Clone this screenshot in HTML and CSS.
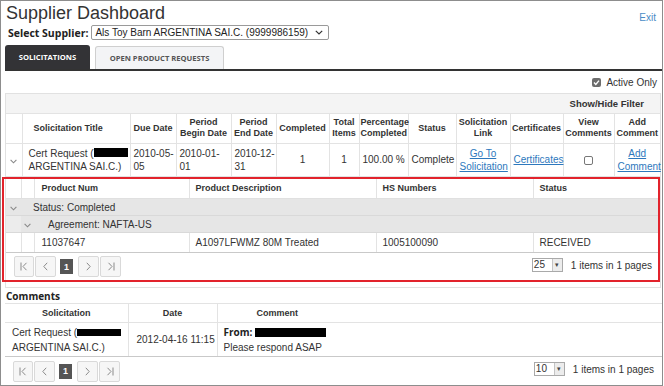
FILE: index.html
```html
<!DOCTYPE html>
<html>
<head>
<meta charset="utf-8">
<link rel="stylesheet" href="styles.css">
</head>
<body>
<div class="frame">
  <header class="top">
    <h1 class="title">Supplier Dashboard</h1>
    <a class="exit" href="#">Exit</a>
  </header>
  <div class="supplier">
    <span class="sel-label">Select Supplier:</span>
    <div class="select"><span>Als Toy Barn ARGENTINA SAI.C. (9999986159)</span><svg class="sel-chev" width="8" height="5" viewBox="0 0 8 5"><path d="M0.8 0.8 L4 4 L7.2 0.8" fill="none" stroke="#333" stroke-width="1.2"/></svg></div>
  </div>
  <nav class="tabs">
    <div class="tab tab-active">SOLICITATIONS</div>
    <div class="tab tab-idle">OPEN PRODUCT REQUESTS</div>
  </nav>
  <div class="active-only">
    <span class="cb cb-on"><svg width="9" height="9" viewBox="0 0 9 9"><path d="M2 4.6 L3.8 6.4 L7 2.6" fill="none" stroke="#fff" stroke-width="1.4"/></svg></span>
    <span>Active Only</span>
  </div>

  <div class="grid">
    <div class="toolbar"><span class="filter">Show/Hide Filter</span></div>
    <table class="sol">
      <colgroup>
        <col class="w16"><col class="w108"><col class="w46"><col class="w55"><col class="w45"><col class="w53"><col class="w30"><col class="w49"><col class="w48"><col class="w54"><col class="w53"><col class="w51"><col class="w46">
      </colgroup>
      <thead>
        <tr>
          <th class="first"></th>
          <th class="th-title">Solicitation Title</th>
          <th>Due Date</th>
          <th>Period<br>Begin Date</th>
          <th>Period<br>End Date</th>
          <th>Completed</th>
          <th>Total<br>Items</th>
          <th>Percentage<br>Completed</th>
          <th>Status</th>
          <th>Solicitation<br>Link</th>
          <th>Certificates</th>
          <th>View<br>Comments</th>
          <th>Add<br>Comment</th>
        </tr>
      </thead>
      <tbody>
        <tr class="datarow">
          <td class="first exp"><svg width="7" height="5" viewBox="0 0 7 5"><path d="M0.6 0.8 L3.5 3.8 L6.4 0.8" fill="none" stroke="#888" stroke-width="1.1"/></svg></td>
          <td class="title-cell">Cert Request (<span class="redact r-title"></span><br>ARGENTINA SAI.C.)</td>
          <td class="dt">2010-05-<br>05</td>
          <td class="dt">2010-01-<br>01</td>
          <td class="dt">2010-12-<br>31</td>
          <td class="ctr">1</td>
          <td class="ctr">1</td>
          <td class="ctr">100.00 %</td>
          <td class="ctr">Complete</td>
          <td class="ctr"><a class="lnk" href="#">Go To</a><br><a class="lnk" href="#">Solicitation</a></td>
          <td class="ctr"><a class="lnk" href="#">Certificates</a></td>
          <td class="ctr"><span class="cb cb-off"></span></td>
          <td class="ctr"><a class="lnk" href="#">Add</a><br><a class="lnk" href="#">Comment</a></td>
        </tr>
        <tr class="detailrow">
          <td colspan="13" class="detail-cell">
            <div class="detail">
              <table class="inner">
                <colgroup><col class="w15"><col class="w13"><col class="w155"><col class="w187"><col class="w157"><col class="w127"></colgroup>
                <thead>
                  <tr><th></th><th></th><th>Product Num</th><th>Product Description</th><th>HS Numbers</th><th>Status</th></tr>
                </thead>
                <tbody>
                  <tr class="grp">
                    <td class="gi"><svg width="7" height="5" viewBox="0 0 7 5"><path d="M0.6 0.8 L3.5 3.8 L6.4 0.8" fill="none" stroke="#888" stroke-width="1.1"/></svg></td>
                    <td colspan="5" class="gtext g1">Status: Completed</td>
                  </tr>
                  <tr class="grp">
                    <td class="gi gi-blank"></td>
                    <td class="gi"><svg width="7" height="5" viewBox="0 0 7 5"><path d="M0.6 0.8 L3.5 3.8 L6.4 0.8" fill="none" stroke="#888" stroke-width="1.1"/></svg></td>
                    <td colspan="4" class="gtext g2">Agreement: NAFTA-US</td>
                  </tr>
                  <tr class="item">
                    <td></td><td></td><td>11037647</td><td>A1097LFWMZ 80M Treated</td><td>1005100090</td><td>RECEIVED</td>
                  </tr>
                </tbody>
              </table>
              <div class="pager">
                <div class="pg-nav">
                  <span class="pbtn"><svg width="8" height="9" viewBox="0 0 8 9"><path d="M1 0.5 V8.5 M6.5 0.8 L3 4.5 L6.5 8.2" fill="none" stroke="#8a8a8a" stroke-width="1"/></svg></span>
                  <span class="pbtn"><svg width="5" height="9" viewBox="0 0 5 9"><path d="M4.2 0.8 L0.8 4.5 L4.2 8.2" fill="none" stroke="#8a8a8a" stroke-width="1"/></svg></span>
                  <span class="pnum">1</span>
                  <span class="pbtn"><svg width="5" height="9" viewBox="0 0 5 9"><path d="M0.8 0.8 L4.2 4.5 L0.8 8.2" fill="none" stroke="#8a8a8a" stroke-width="1"/></svg></span>
                  <span class="pbtn"><svg width="8" height="9" viewBox="0 0 8 9"><path d="M1.5 0.8 L5 4.5 L1.5 8.2 M7 0.5 V8.5" fill="none" stroke="#8a8a8a" stroke-width="1"/></svg></span>
                </div>
                <div class="pg-info">
                  <span class="psize"><span class="pval">25</span><span class="parr">&#9662;</span></span>
                  <span class="ptext">1 items in 1 pages</span>
                </div>
              </div>
              <div class="highlight"></div>
            </div>
          </td>
        </tr>
      </tbody>
    </table>
  </div>

  <section class="comments">
    <div class="ctitle">Comments</div>
    <table class="ctable">
      <colgroup><col class="w123"><col class="w89"><col class="w120"><col></colgroup>
      <thead>
        <tr><th>Solicitation</th><th>Date</th><th>Comment</th><th class="blank"></th></tr>
      </thead>
      <tbody>
        <tr>
          <td class="c-sol"><div class="cl">Cert Request (<span class="redact r-csol"></span></div><div class="cl">ARGENTINA SAI.C.)</div></td>
          <td class="c-date">2012-04-16 11:15</td>
          <td class="c-com"><div class="cl"><b class="from">From:</b> <span class="redact r-from"></span></div><div class="cl">Please respond ASAP</div></td>
          <td class="blank"></td>
        </tr>
      </tbody>
    </table>
    <div class="pager pager2">
      <div class="pg-nav">
        <span class="pbtn"><svg width="8" height="9" viewBox="0 0 8 9"><path d="M1 0.5 V8.5 M6.5 0.8 L3 4.5 L6.5 8.2" fill="none" stroke="#8a8a8a" stroke-width="1"/></svg></span>
        <span class="pbtn"><svg width="5" height="9" viewBox="0 0 5 9"><path d="M4.2 0.8 L0.8 4.5 L4.2 8.2" fill="none" stroke="#8a8a8a" stroke-width="1"/></svg></span>
        <span class="pnum">1</span>
        <span class="pbtn"><svg width="5" height="9" viewBox="0 0 5 9"><path d="M0.8 0.8 L4.2 4.5 L0.8 8.2" fill="none" stroke="#8a8a8a" stroke-width="1"/></svg></span>
        <span class="pbtn"><svg width="8" height="9" viewBox="0 0 8 9"><path d="M1.5 0.8 L5 4.5 L1.5 8.2 M7 0.5 V8.5" fill="none" stroke="#8a8a8a" stroke-width="1"/></svg></span>
      </div>
      <div class="pg-info">
        <span class="psize"><span class="pval">10</span><span class="parr">&#9662;</span></span>
        <span class="ptext">1 items in 1 pages</span>
      </div>
    </div>
  </section>
</div>
</body>
</html>
```
FILE: styles.css
```css
* { box-sizing: border-box; }
html, body { margin: 0; padding: 0; background: #fff; }

.frame {
  width: 663px;
  height: 386px;
  border: 1px solid #8d8d8d;
  padding: 0 0 0 4px;
  overflow: hidden;
  font-family: "Liberation Sans", Arial, sans-serif;
  font-size: 10px;
  color: #333;
}

/* header */
.top {
  display: flex;
  justify-content: space-between;
  align-items: flex-end;
  height: 23px;
  padding-right: 6px;
}
.title {
  margin: 0 0 0 1px;
  font-weight: normal;
  font-size: 18px;
  line-height: 22px;
  color: #333;
}
.exit {
  font-size: 10px;
  line-height: 12px;
  color: #4a8bc6;
  text-decoration: none;
}

.supplier {
  display: flex;
  align-items: center;
  height: 15px;
  margin-top: 1px;
  padding-left: 3px;
}
.sel-label {
  font-family: "Open Sans", "Liberation Sans", sans-serif;
  font-weight: 700;
  font-size: 10.5px;
  margin-right: 3px;
  color: #222;
}
.select {
  display: flex;
  align-items: center;
  justify-content: space-between;
  width: 238px;
  height: 15px;
  border: 1px solid #9a9a9a;
  border-radius: 2px;
  padding: 0 5px 0 3px;
  font-size: 10px;
  color: #222;
}

/* tabs */
.tabs {
  display: flex;
  align-items: flex-end;
  gap: 5px;
  height: 27px;
  margin-top: 4px;
  border-bottom: 2px solid #333;
}
.tab {
  display: flex;
  align-items: center;
  justify-content: center;
  font-family: "Open Sans", "Liberation Sans", sans-serif;
  font-weight: 700;
  font-size: 7.6px;
  border-radius: 3px 3px 0 0;
}
.tab-active {
  width: 85px;
  height: 24px;
  background: #333336;
  color: #fff;
}
.tab-idle {
  width: 129px;
  height: 23px;
  background: #f3f4f6;
  border: 1px solid #cfcfcf;
  border-bottom: 0;
  color: #555;
}

.active-only {
  display: flex;
  justify-content: flex-end;
  align-items: center;
  gap: 5px;
  height: 13px;
  margin-top: 5px;
  padding-right: 5px;
  font-size: 10px;
}

.cb {
  display: inline-block;
  width: 9px;
  height: 9px;
  border-radius: 2px;
  vertical-align: middle;
}
.cb svg { display: block; }
.cb-on { background: #6d6d6d; }
.cb-off { border: 1px solid #777; background: #fff; }

/* main grid */
.grid {
  margin-top: 4px;
  margin-right: 1px;
  border: 1px solid #e1e1e1;
}
.toolbar {
  display: flex;
  justify-content: flex-end;
  align-items: center;
  height: 20px;
  background: #f4f4f4;
  border-bottom: 1px solid #e3e3e3;
  padding-right: 16px;
}
.filter { font-weight: 700; font-size: 9.5px; color: #333; }

table { border-collapse: collapse; table-layout: fixed; }
.sol { width: 100%; }

.w13 { width: 13px; } .w15 { width: 15px; } .w16 { width: 16px; }
.w30 { width: 30px; } .w45 { width: 45px; } .w46 { width: 46px; }
.w48 { width: 48px; } .w49 { width: 49px; } .w51 { width: 51px; }
.w53 { width: 53px; } .w54 { width: 54px; } .w55 { width: 55px; }
.w89 { width: 89px; } .w108 { width: 108px; } .w120 { width: 120px; }
.w123 { width: 123px; } .w127 { width: 127px; } .w155 { width: 155px; }
.w157 { width: 157px; } .w187 { width: 187px; }

.sol th {
  height: 29px;
  padding: 0 1px;
  font-size: 9px;
  line-height: 11px;
  font-weight: 700;
  text-align: center;
  color: #333;
  border-left: 1px solid #e3e3e3;
  border-bottom: 1px solid #e3e3e3;
}
.sol th.th-title { text-align: left; padding-left: 11px; }
.sol th.first, .sol td.first { border-left: 0; }

.datarow td {
  height: 33px;
  padding: 0 3px;
  font-size: 10px;
  line-height: 13px;
  vertical-align: middle;
  border-left: 1px solid #e3e3e3;
  border-bottom: 1px solid #e3e3e3;
  white-space: nowrap;
}
.datarow td.exp { text-align: center; padding: 0; }
.datarow td.exp svg { display: inline-block; vertical-align: middle; margin-top: 2px; }
.datarow td.title-cell { padding-left: 6px; overflow: visible; }
.datarow td.dt { padding-left: 3px; }
.ctr { text-align: center; }
.lnk { color: #2d78bd; text-decoration: underline; }
.redact { display: inline-block; background: #000; vertical-align: middle; }
.r-title { width: 34px; height: 9px; margin-top: -2px; }

/* detail */
.detail-cell { padding: 0; }
.detail {
  position: relative;
  padding: 2px 0 6px 0;
}
.highlight {
  position: absolute;
  left: -4px;
  top: 0;
  right: 0;
  bottom: 5px;
  border: 2px solid #e2232c;
  pointer-events: none;
}
.inner { width: 100%; }
.inner th {
  height: 20px;
  padding: 0 0 0 6px;
  font-size: 9px;
  font-weight: 700;
  text-align: left;
  color: #333;
  border-left: 1px solid #e3e3e3;
  border-bottom: 1px solid #e0e0e0;
}
.inner th:first-child { border-left: 0; }
.inner th:nth-child(3) { padding-left: 7px; }
.grp td {
  height: 17px;
  background: #e6e6e6;
  border-bottom: 1px solid #d9d9d9;
  font-size: 10px;
  padding: 0;
}
.grp td.gi { text-align: center; }
.grp td.gi svg { display: inline-block; vertical-align: middle; margin-top: 2px; }
.grp td.gi-blank { background: #ececec; }
.gtext.g1 { padding-left: 12px; }
.gtext.g2 { padding-left: 14px; }
.item td {
  height: 19px;
  padding: 0 0 0 6px;
  font-size: 10px;
  border-left: 1px solid #e3e3e3;
}
.item td:first-child { border-left: 0; }
.item td:nth-child(3) { padding-left: 7px; }

/* pager */
.pager {
  display: flex;
  justify-content: space-between;
  align-items: center;
  height: 29px;
  padding: 0 8px 0 8px;
  border-top: 1px solid #c9c9c9;
}
.pg-nav { display: flex; align-items: center; }
.pbtn {
  display: flex;
  align-items: center;
  justify-content: center;
  width: 21px;
  height: 21px;
  background: #f6f6f6;
  border: 1px solid #d9d9d9;
  border-radius: 2px;
  margin-right: 1px;
}
.pbtn:first-child { width: 20px; }
.pnum {
  display: flex;
  align-items: center;
  justify-content: center;
  width: 13px;
  height: 15px;
  margin: 0 5px 0 3px;
  background: #555;
  color: #fff;
  font-weight: 700;
  font-size: 9px;
}
.pg-info { display: flex; align-items: center; gap: 8px; margin-top: -3px; }
.psize { display: flex; height: 14px; border: 1px solid #a9a9a9; }
.pval { width: 19px; padding-left: 1px; font-size: 10px; line-height: 12px; background: #fff; }
.parr {
  width: 10px;
  background: #ececec;
  border-left: 1px solid #c4c4c4;
  font-size: 7px;
  line-height: 12px;
  text-align: center;
  color: #444;
}
.ptext { font-size: 10px; }

/* comments */
.ctitle {
  font-family: "Open Sans", "Liberation Sans", sans-serif;
  font-weight: 700;
  font-size: 10px;
  line-height: 14px;
  margin-top: 1px;
  padding-left: 1px;
  color: #222;
}
.ctable { width: 100%; }
.ctable th {
  height: 19px;
  font-size: 9px;
  font-weight: 700;
  text-align: center;
  border-top: 1px solid #e3e3e3;
  border-bottom: 1px solid #e3e3e3;
  border-left: 1px solid #e3e3e3;
  color: #333;
}
.ctable th:first-child, .ctable td:first-child { border-left: 0; }
.ctable th.blank, .ctable td.blank { border-left: 0; }
.ctable td {
  height: 34px;
  font-size: 10px;
  border-left: 1px solid #e3e3e3;
  vertical-align: middle;
  white-space: nowrap;
  padding-top: 2px;
}
.cl {
  display: flex;
  align-items: center;
  gap: 3px;
  height: 15px;
  line-height: 15px;
}
.c-sol { padding-left: 7px; }
.c-sol .cl { gap: 0; }
.c-date { padding-left: 8px; }
.c-com { padding-left: 6px; }
.from { font-family: "Open Sans", "Liberation Sans", sans-serif; font-weight: 700; font-size: 10px; color: #222; }
.r-csol { width: 44px; height: 7px; }
.r-from { width: 71px; height: 9px; }
.pager2 { height: 29px; }
.pager2 .pg-info { margin-top: -4px; }
```
